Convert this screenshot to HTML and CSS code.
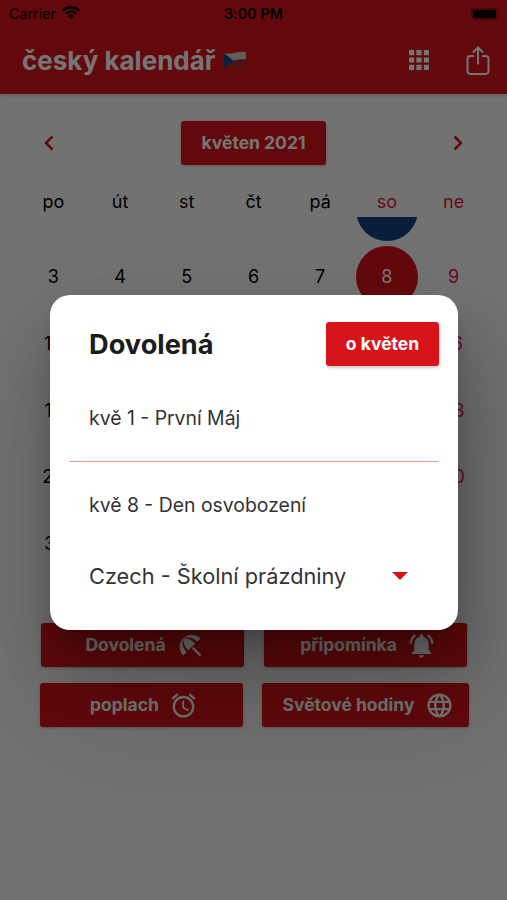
FILE: index.html
```html
<!DOCTYPE html>
<html lang="cs">
<head>
<meta charset="utf-8">
<title>český kalendář</title>
<link rel="stylesheet" href="styles.css">
</head>
<body>
<div class="screen">
  <header class="top">
    <div class="status">
      <div class="carrier"><span>Carrier</span>
        <svg class="wifi" viewBox="0 0 18 13"><path d="M9 13l3-3.200a4.300 4.300 0 0 0-6 0z"/><path d="M3.800 7.600a7.400 7.400 0 0 1 10.400 0M1 4.600a11.400 11.400 0 0 1 16 0" fill="none" stroke="#000" stroke-width="2.500"/></svg>
      </div>
      <div class="clock">3:00 PM</div>
      <div class="battery"><i></i></div>
    </div>
    <div class="appbar">
      <h1><span>český kalendář</span>
        <svg class="flag" viewBox="0 0 24 18"><path d="M1 2.200Q6 3.600 12 1.800T23 1v7.400q-5-.4-11 1.300T1 10z" fill="#cfcfd2"/><path d="M1 9.600q5 1.200 11-.3t11-1V15q-5-.5-11 1T1 16.500z" fill="#9a2a33"/><path d="M1 2.200 10.500 9.400 1 16.500z" fill="#17468c"/></svg>
      </h1>
      <svg class="apps" viewBox="0 0 20 20"><path d="M0 0h5.200v5.200H0zM7.400 0h5.200v5.200H7.400zM14.800 0H20v5.200h-5.200zM0 7.400h5.200v5.200H0zM7.400 7.400h5.200v5.200H7.400zM14.800 7.400H20v5.200h-5.200zM0 14.800h5.200V20H0zM7.400 14.800h5.200V20H7.400zM14.800 14.800H20V20h-5.200z"/></svg>
      <svg class="share" viewBox="0 0 24 30"><path d="M8 10H4.500A3 3 0 0 0 1.500 13v12a3 3 0 0 0 3 3h15a3 3 0 0 0 3-3V13a3 3 0 0 0-3-3H16M12 18.500V2M7 6.500l5-5 5 5"/></svg>
    </div>
  </header>

  <main>
    <div class="month">
      <svg class="arrow" viewBox="0 0 10 16"><path d="M8.500 1.500 2 8l6.500 6.500"/></svg>
      <div class="btn month-btn">květen 2021</div>
      <svg class="arrow" viewBox="0 0 10 16"><path d="M1.500 1.500 8 8l-6.500 6.500"/></svg>
    </div>
    <div class="week names"><span>po</span><span>út</span><span>st</span><span>čt</span><span>pá</span><span class="we">so</span><span class="we">ne</span></div>
    <div class="days">
      <div class="week first"><span></span><span></span><span></span><span></span><span></span><span class="dot holiday"></span><span></span></div>
      <div class="week"><span>3</span><span>4</span><span>5</span><span>6</span><span>7</span><span class="dot today">8</span><span class="we">9</span></div>
      <div class="week"><span>10</span><span class="we sunday">16</span></div>
      <div class="week"><span>17</span><span class="we sunday">23</span></div>
      <div class="week"><span>24</span><span class="we sunday">30</span></div>
      <div class="week"><span>31</span></div>
    </div>
    <div class="actions">
      <div class="row">
        <div class="btn"><span>Dovolená</span><svg viewBox="0 0 24 24"><path d="M13.127 14.56l1.43-1.43 6.44 6.443L19.57 21zm4.293-5.73l2.86-2.86c-3.95-3.95-10.35-3.96-14.3-.02 3.93-1.3 8.31-.25 11.44 2.88zM5.950 5.980c-3.940 3.950-3.930 10.350.02 14.300l2.860-2.860C5.700 14.290 4.650 9.910 5.950 5.980zm.02-.02l-.01.01c-.38 3.010 1.170 6.880 4.300 10.020l5.730-5.730c-3.130-3.130-7.010-4.680-10.020-4.300z"/></svg></div>
        <div class="btn"><span>připomínka</span><svg viewBox="0 0 24 24"><path d="M7.580 4.080L6.150 2.650C3.750 4.480 2.170 7.300 2.030 10.500h2c.15-2.650 1.510-4.970 3.550-6.420zm12.390 6.420h2c-.15-3.200-1.730-6.020-4.120-7.850l-1.420 1.430c2.020 1.450 3.390 3.770 3.540 6.420zM18 11c0-3.070-1.640-5.640-4.500-6.320V4c0-.83-.67-1.500-1.500-1.500s-1.500.67-1.500 1.500v.68C7.630 5.360 6 7.920 6 11v5l-2 2v1h16v-1l-2-2v-5zm-6 11c.14 0 .27-.01.4-.04.65-.14 1.180-.58 1.440-1.180.1-.24.15-.5.15-.78h-4c.01 1.100.9 2 2.010 2z"/></svg></div>
      </div>
      <div class="row second">
        <div class="btn"><span>poplach</span><svg viewBox="0 0 24 24"><path d="M22 5.720l-4.600-3.860-1.290 1.530 4.600 3.860L22 5.720zM7.880 3.390L6.600 1.860 2 5.710l1.290 1.530 4.590-3.850zM12.500 8H11v6l4.750 2.850.75-1.230-4-2.370V8zM12 4c-4.970 0-9 4.030-9 9s4.020 9 9 9c4.970 0 9-4.030 9-9s-4.030-9-9-9zm0 16c-3.870 0-7-3.130-7-7s3.130-7 7-7 7 3.130 7 7-3.130 7-7 7z"/></svg></div>
        <div class="btn"><span>Světové hodiny</span><svg viewBox="0 0 24 24"><path d="M11.990 2C6.470 2 2 6.480 2 12s4.470 10 9.990 10C17.520 22 22 17.520 22 12S17.520 2 11.990 2zm6.930 6h-2.950c-.32-1.250-.78-2.450-1.380-3.560 1.840.63 3.370 1.910 4.330 3.560zM12 4.040c.83 1.200 1.480 2.530 1.910 3.960h-3.820c.43-1.430 1.080-2.760 1.910-3.960zM4.260 14C4.100 13.360 4 12.690 4 12s.1-1.360.26-2h3.380c-.08.66-.14 1.320-.14 2 0 .68.06 1.340.14 2H4.260zm.82 2h2.950c.32 1.250.78 2.450 1.380 3.560-1.840-.63-3.370-1.900-4.330-3.560zm2.950-8H5.080c.96-1.660 2.490-2.930 4.330-3.560C8.810 5.550 8.350 6.750 8.030 8zM12 19.960c-.83-1.200-1.480-2.530-1.910-3.960h3.820c-.43 1.430-1.080 2.760-1.910 3.960zM14.340 14H9.660c-.09-.66-.16-1.320-.16-2 0-.68.07-1.350.16-2h4.680c.09.65.16 1.320.16 2 0 .68-.07 1.340-.16 2zm.25 5.560c.6-1.110 1.060-2.310 1.380-3.560h2.950c-.96 1.650-2.490 2.930-4.330 3.560zM16.360 14c.08-.66.14-1.320.14-2 0-.68-.06-1.340-.14-2h3.380c.16.64.26 1.310.26 2s-.1 1.360-.26 2h-3.380z"/></svg></div>
      </div>
    </div>
  </main>

  <div class="backdrop">
    <section class="dialog">
      <div class="dialog-head"><h2>Dovolená</h2><div class="btn about">o květen</div></div>
      <div class="event">kvě 1 - První Máj</div>
      <div class="rule"></div>
      <div class="event">kvě 8 - Den osvobození</div>
      <div class="select"><span>Czech - Školní prázdniny</span><svg viewBox="0 0 16 8"><path d="M0 0h16L8 8z"/></svg></div>
    </section>
  </div>
</div>
</body>
</html>
```
FILE: styles.css
```css
* { box-sizing: border-box; }
body { margin: 0; font-family: Inter, "Liberation Sans", sans-serif; color: #000; }
.screen { position: relative; width: 507px; height: 900px; overflow: hidden; background: #f8f8f8; }
.top { height: 94px; background: #d7141a; box-shadow: 0 1px 4px rgba(0,0,0,.2); }
.status { display: grid; grid-template-columns: 1fr auto 1fr; align-items: center; height: 27px; padding: 0 9px; font-size: 14.300px; }
.carrier { display: flex; align-items: center; gap: 6px; }
.wifi { width: 18px; height: 13px; margin-top: -2px; }
.clock { font-size: 14.300px; font-weight: 600; letter-spacing: .1px; }
.battery { justify-self: end; width: 27px; height: 12px; padding: 2px; border-radius: 3px; background: #a50d13; }
.battery i { display: block; width: 23px; height: 8px; border-radius: 2px; background: #000; }
.appbar { display: flex; align-items: center; height: 67px; padding: 0 17px 0 22px; }
.appbar h1 { display: flex; align-items: center; gap: 8px; flex: 1; margin: 0; font-size: 26px; font-weight: 700; line-height: 32px; color: #fff; }
.flag { width: 24px; height: 18px; margin-top: -2px; }
.apps { width: 20px; height: 20px; margin: -2px 37px 0 0; fill: #fff; }
.share { width: 24px; height: 30px; fill: none; stroke: #fff; stroke-width: 2; }

.btn { display: flex; align-items: center; justify-content: center; height: 44px; border-radius: 3px; background: #d7141a; color: #fff; font-size: 17.500px; font-weight: 700; box-shadow: 0 1px 3px rgba(0,0,0,.25); }
.month { display: flex; align-items: center; justify-content: space-between; margin-top: 26px; padding: 0 44px; height: 45px; }
.month-btn { width: 145px; }
.arrow { width: 10px; height: 16px; fill: none; stroke: #d7141a; stroke-width: 2.500; }
.week { display: grid; grid-template-columns: repeat(7, 1fr); height: 66.700px; place-items: center; font-size: 18px; }
.names { height: 41px; margin: 11px 20px 0; padding-top: 10px; }
.we { color: #d81c3c; }
.sunday { grid-column: 7; }
.days { height: 391px; margin: 0 20px; overflow: hidden; }
.first { margin-top: -40.300px; }
.dot { width: 62px; height: 62px; border-radius: 50%; display: grid; place-items: center; color: #fff; }
.holiday { background: #11457e; }
.today { background: #d7141a; }
.actions { display: flex; flex-direction: column; gap: 16px; margin: 15px 38px 0 40px; }
.row { display: grid; grid-template-columns: 203px 203px; gap: 20px; padding-left: 1px; }
.second { grid-template-columns: 203px 207px; gap: 19px; padding-left: 0; }
.actions .btn { gap: 10px; padding-left: 5px; }
.actions span { margin-top: -2px; }
.actions svg { width: 29px; height: 29px; fill: #fff; }

.backdrop { position: absolute; inset: 0; display: flex; align-items: flex-start; padding: 295px 49px 0 50px; background: rgba(0,0,0,.54); }
.dialog { width: 408px; height: 335px; padding: 27px 19px 0; border-radius: 20px; background: #fff; box-shadow: 0 15px 20px -9px rgba(0,0,0,.25), 4px 36px 52px 4px rgba(0,0,0,.17), 15px 70px 120px 10px rgba(0,0,0,.17); }
.dialog-head { display: flex; align-items: center; justify-content: space-between; height: 44px; padding-left: 20px; }
.dialog h2 { margin: 0; padding-top: 1px; font-size: 27.200px; font-weight: 700; color: #1c1c1c; }
.about { width: 113px; padding-bottom: 1px; box-shadow: 1px 2px 3px rgba(0,0,0,.2); }
.event { height: 95px; padding: 10px 20px 0; line-height: 84px; font-size: 19.400px; color: #333; }
.rule { height: 1px; background: #f09a9d; }
.rule + .event { height: 88px; padding-top: 0; line-height: 87px; }
.select { display: flex; align-items: center; justify-content: space-between; height: 52px; padding: 0 31px 0 20px; font-size: 21.750px; color: #333; }
.select span { margin-top: -1px; }
.select svg { width: 16px; height: 8px; fill: #d7141a; }
```
